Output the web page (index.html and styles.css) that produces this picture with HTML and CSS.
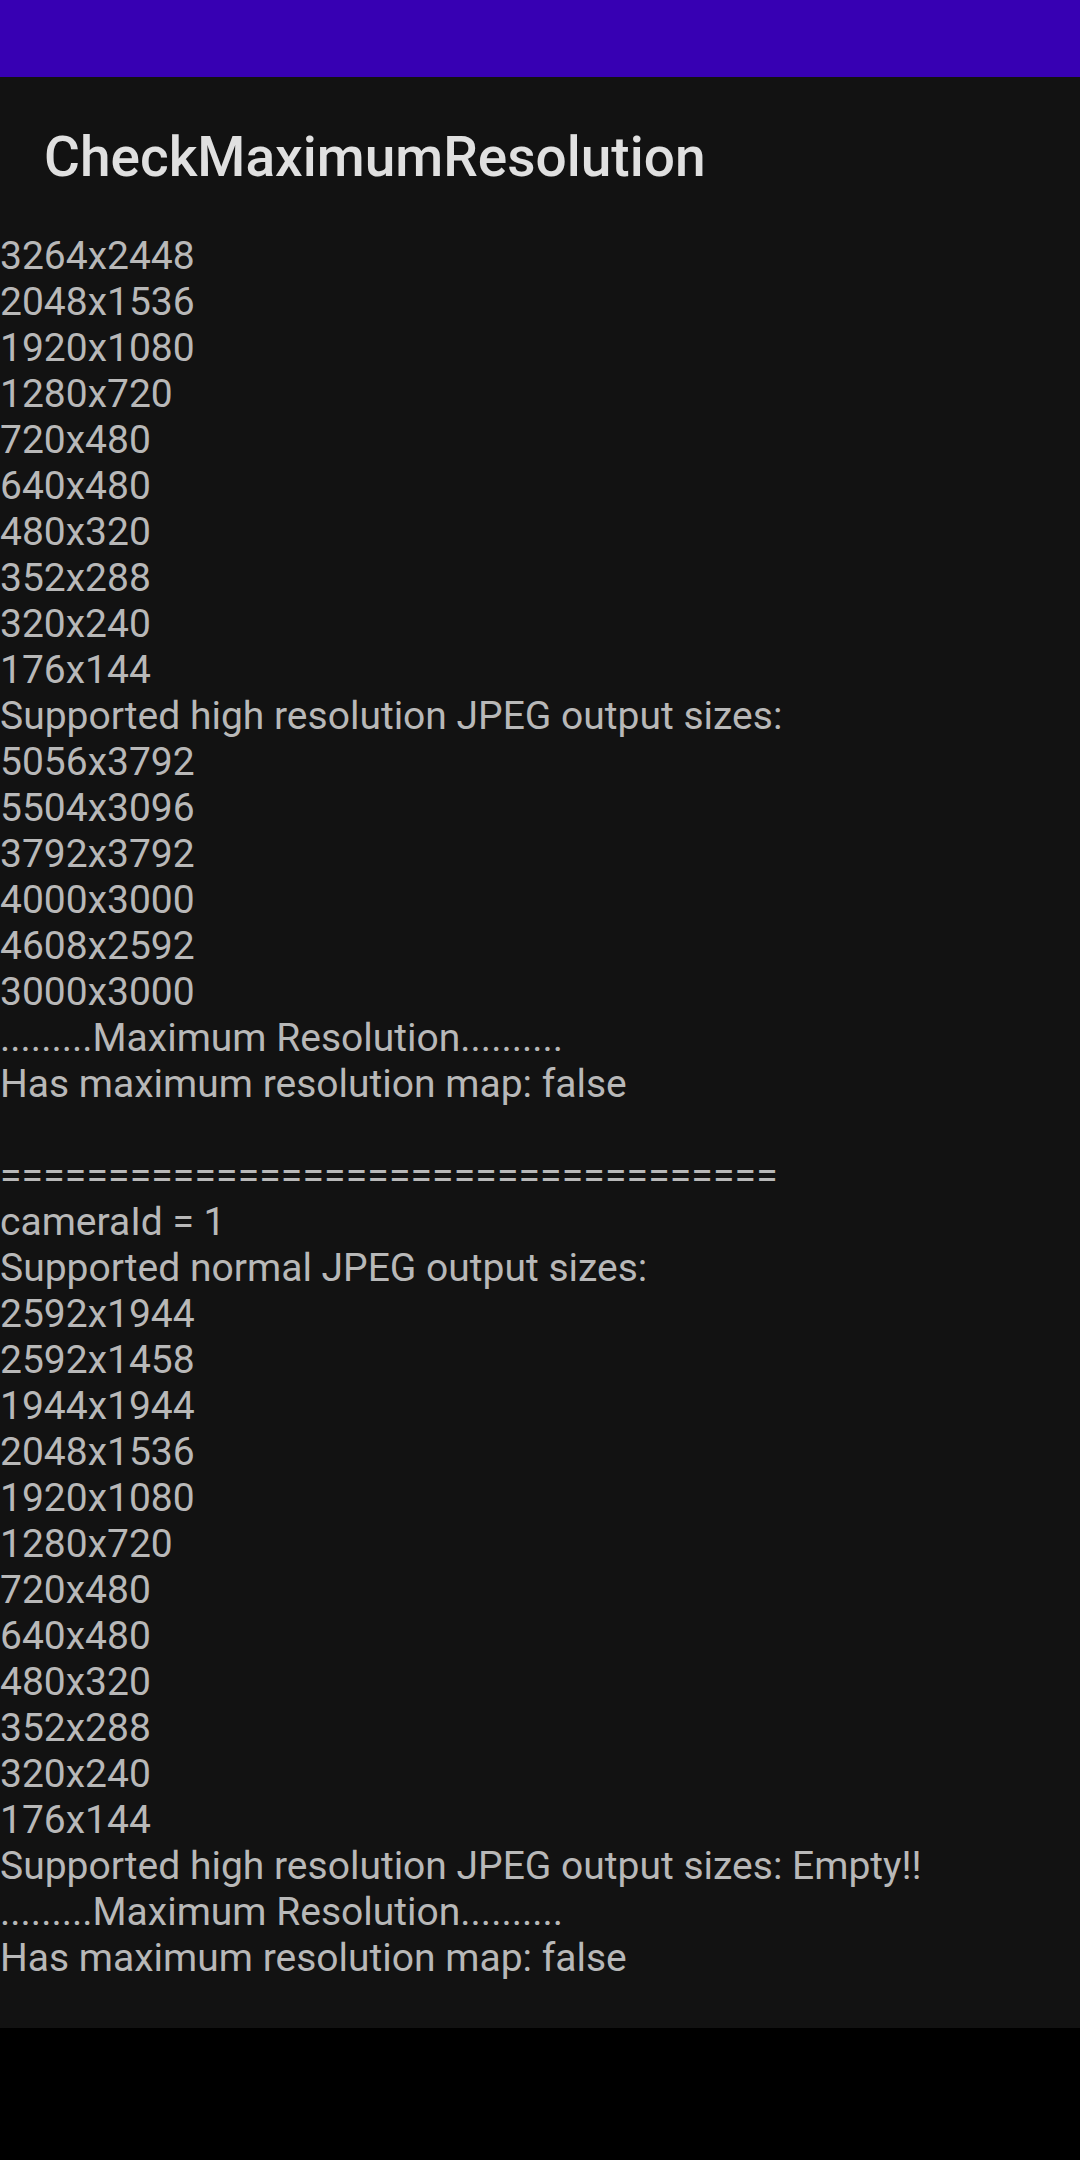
FILE: index.html
```html
<!DOCTYPE html>
<html>
<head>
<meta charset="utf-8">
<link rel="stylesheet" href="styles.css">
</head>
<body>
<div class="screen">
  <div class="status-bar"></div>
  <div class="app-bar"><span class="title">CheckMaximumResolution</span></div>
  <div class="content">
    <div class="log">3264x2448
2048x1536
1920x1080
1280x720
720x480
640x480
480x320
352x288
320x240
176x144
Supported high resolution JPEG output sizes:
5056x3792
5504x3096
3792x3792
4000x3000
4608x2592
3000x3000
.........Maximum Resolution..........
Has maximum resolution map: false

<span class="rule">====================================</span>
cameraId = 1
Supported normal JPEG output sizes:
2592x1944
2592x1458
1944x1944
2048x1536
1920x1080
1280x720
720x480
640x480
480x320
352x288
320x240
176x144
Supported high resolution JPEG output sizes: Empty!!
.........Maximum Resolution..........
Has maximum resolution map: false</div>
  </div>
  <div class="nav-bar"></div>
</div>
</body>
</html>
```

FILE: styles.css
```css
html, body {
  margin: 0;
  padding: 0;
  background: #000;
}
.screen {
  width: 1080px;
  height: 2160px;
  display: flex;
  flex-direction: column;
  font-family: Roboto, "Noto Sans", sans-serif;
  background: #000;
}
.status-bar {
  height: 77px;
  background: #3700b3;
  flex: none;
}
.app-bar {
  height: 154px;
  flex: none;
  background: #121212;
  display: flex;
  align-items: center;
  padding-left: 44px;
}
.title {
  font-size: 55px;
  font-weight: 500;
  color: #e0e0e0;
  line-height: 64px;
  margin-top: 6px;
}
.content {
  background: #121212;
  flex: none;
  height: 1797px;
  padding-top: 2px;
  box-sizing: border-box;
}
.log {
  white-space: pre;
  font-size: 39px;
  line-height: 46px;
  color: #b8b8b8;
}
.rule {
  letter-spacing: 0.2px;
}
.nav-bar {
  flex: 1;
  background: #000;
}
```
